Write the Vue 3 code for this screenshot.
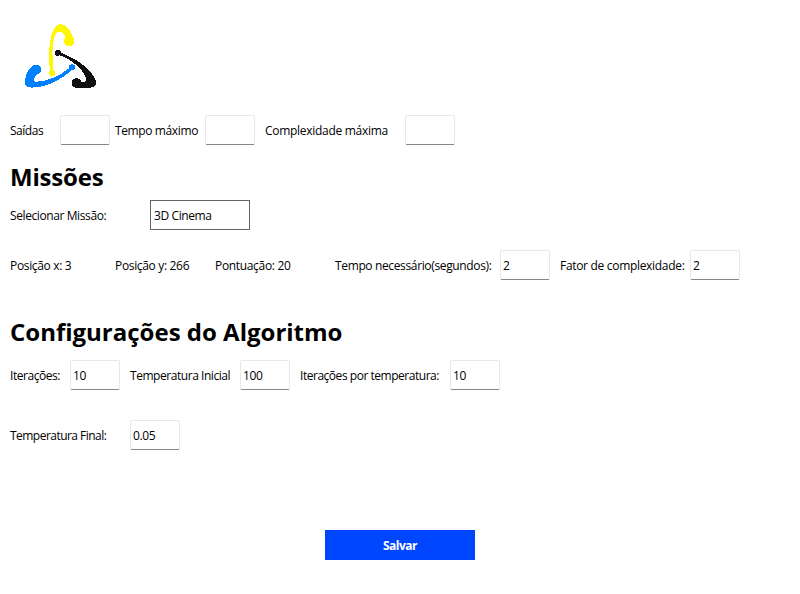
<script setup>
import { ref } from 'vue'

const exits = ref('')
const maxTime = ref('')
const maxComplexity = ref('')
const mission = ref('3D Cinema')
const requiredTime = ref('2')
const complexity = ref('2')
const iterations = ref('10')
const initialTemp = ref('100')
const iterationsPerTemp = ref('10')
const finalTemp = ref('0.05')
</script>

<template>
  <main class="window">
    <svg class="logo" viewBox="0 0 95 85" width="95" height="85" aria-hidden="true">
      <g fill="#fff700">
        <path d="M35.300 58C32.500 40 34 9.300 45.500 9C52 9 55 16 58.500 22.500L50.500 27C51.500 20 48 16.500 44.500 16.500C37 17 36.200 38 38.800 58Z" />
        <circle cx="54.300" cy="26" r="5.200" />
        <circle cx="37.200" cy="58" r="3.200" />
      </g>
      <g fill="#0080ff">
        <path d="M55 52.500C45 61 31 67 20.500 66.800C17 66 19 61 24.500 57L17 51C12.500 55 10 61.500 10 67C10 71 12.500 72.600 17 72.600C32 72.600 47 64.500 57.500 54.500Z" />
        <circle cx="21.300" cy="54.400" r="4.900" />
        <circle cx="57" cy="52.300" r="3" />
      </g>
      <g fill="#111">
        <path d="M43 36.700C61 43 76.500 54 80.800 65.500C82 70 79.500 72.600 75 72.600H61V67H70C72.500 66.500 71 61 67.500 56.500C61 48.500 53 42.500 42.500 39.500Z" />
        <circle cx="61.500" cy="68" r="4.900" />
        <circle cx="42.700" cy="37.800" r="3" />
      </g>
    </svg>

    <div class="row limits">
      <label class="t-exits">Saídas</label>
      <input v-model="exits" />
      <label class="t-max-time second">Tempo máximo</label>
      <input v-model="maxTime" />
      <label class="t-max-complexity third">Complexidade máxima</label>
      <input v-model="maxComplexity" />
    </div>

    <h1 class="t-missions">Missões</h1>

    <div class="row selection">
      <label class="t-select">Selecionar Missão:</label>
      <input v-model="mission" class="select" />
    </div>

    <div class="row details">
      <span class="t-x">Posição x: 3</span>
      <span class="t-y">Posição y: 266</span>
      <span class="t-score">Pontuação: 20</span>
      <label class="t-required">Tempo necessário(segundos):</label>
      <input v-model="requiredTime" />
      <label class="t-factor third">Fator de complexidade:</label>
      <input v-model="complexity" />
    </div>

    <h1 class="t-config">Configurações do Algoritmo</h1>

    <div class="row algorithm">
      <label class="t-iterations">Iterações:</label>
      <input v-model="iterations" />
      <label class="t-initial third">Temperatura Inicial</label>
      <input v-model="initialTemp" />
      <label class="t-per-temp third">Iterações por temperatura:</label>
      <input v-model="iterationsPerTemp" />
    </div>

    <div class="row final">
      <label class="t-final">Temperatura Final:</label>
      <input v-model="finalTemp" />
    </div>

    <button type="button">Salvar</button>
  </main>
</template>

<style>
body {
  margin: 0;
  background: #fff;
}
</style>

<style scoped>
.window {
  box-sizing: border-box;
  display: flex;
  flex-direction: column;
  width: 800px;
  height: 594px;
  padding: 15px 10px 0;
  background: #fff;
  color: #000;
  font: 12px/30px 'Open Sans', 'Noto Sans', sans-serif;
}
.logo {
  display: block;
  margin-left: 5px;
  shape-rendering: crispEdges;
}
.row {
  display: grid;
  height: 30px;
  justify-content: start;
  white-space: nowrap;
}
label,
span {
  line-height: 32px;
  height: 30px;
}
.limits {
  grid-template-columns: 50px 50px 95px 50px 150px 50px;
  margin-top: 15px;
}
.selection {
  grid-template-columns: 140px 100px;
}
.details {
  grid-template-columns: 105px 100px 120px 165px 50px 140px 50px;
  margin-top: 20px;
}
.algorithm {
  grid-template-columns: 60px 50px 120px 50px 160px 50px;
}
.final {
  grid-template-columns: 120px 50px;
  margin-top: 30px;
}
.second {
  padding-left: 5px;
}
.third {
  padding-left: 10px;
}
.t-exits { letter-spacing: -0.48px; }
.t-max-time { letter-spacing: -0.38px; }
.t-max-complexity { letter-spacing: -0.29px; }
.t-select { letter-spacing: -0.4px; }
.t-x,
.t-y,
.t-score { letter-spacing: -0.33px; }
.t-required { letter-spacing: -0.36px; }
.t-factor { letter-spacing: -0.31px; }
.t-iterations { letter-spacing: -0.45px; }
.t-initial { letter-spacing: -0.45px; }
.t-per-temp { letter-spacing: -0.47px; }
.t-final { letter-spacing: -0.53px; }
h1 {
  margin: 15px 0 5px;
  height: 35px;
  font-size: 24px;
  line-height: 33px;
  font-weight: 700;
  white-space: nowrap;
}
.t-missions {
  letter-spacing: -0.2px;
}
.t-config {
  margin-top: 35px;
  margin-bottom: 10px;
}
input {
  box-sizing: border-box;
  min-width: 0;
  width: 100%;
  height: 30px;
  margin: 0;
  padding: 1px 2px 0;
  border: 1px solid #e8e8e8;
  border-bottom-color: #858585;
  border-radius: 2px;
  outline: 0;
  background: #fff;
  color: #000;
  font: inherit;
  line-height: 27px;
  letter-spacing: -0.4px;
}
.select {
  padding-left: 3px;
  border-color: #646464;
  border-radius: 0;
}
button {
  align-self: center;
  width: 150px;
  height: 30px;
  margin-top: 80px;
  padding: 2px 0 0;
  border: 0;
  background: #0046ff;
  color: #fff;
  font: 700 12px/28px 'Open Sans', 'Noto Sans', sans-serif;
  letter-spacing: -0.5px;
}
</style>
